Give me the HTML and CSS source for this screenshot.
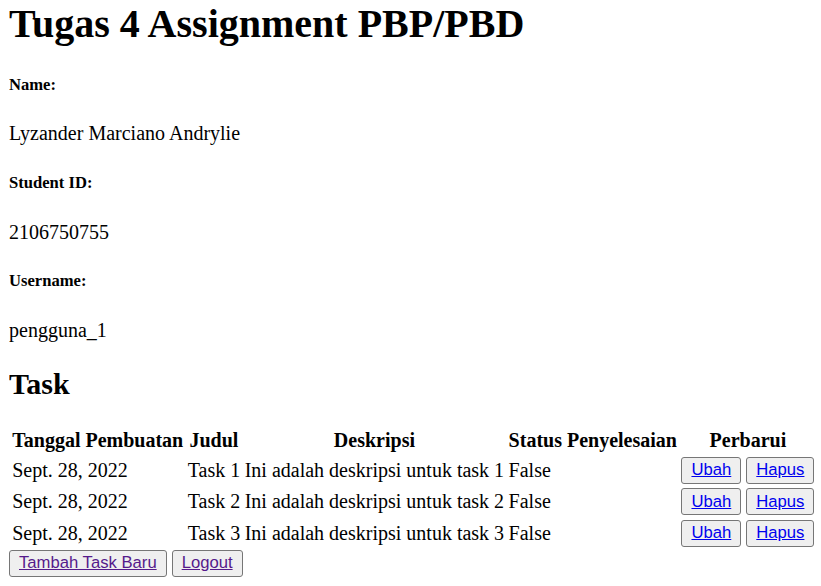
FILE: index.html
```html
<!DOCTYPE html>
<html>
<head>
<meta charset="utf-8">
<title>Tugas 4</title>
<link rel="stylesheet" href="styles.css">
</head>
<body>
<h1 class="title">Tugas 4 Assignment PBP/PBD</h1>
<h5 class="label">Name:</h5>
<p class="value">Lyzander Marciano Andrylie</p>
<h5 class="label">Student ID:</h5>
<p class="value">2106750755</p>
<h5 class="label">Username:</h5>
<p class="value">pengguna_1</p>
<h2 class="section">Task</h2>
<table class="tasks">
  <tr>
    <th>Tanggal Pembuatan</th>
    <th>Judul</th>
    <th>Deskripsi</th>
    <th>Status Penyelesaian</th>
    <th>Perbarui</th>
  </tr>
  <tr>
    <td>Sept. 28, 2022</td>
    <td>Task 1</td>
    <td>Ini adalah deskripsi untuk task 1</td>
    <td>False</td>
    <td><button class="btn"><a class="link" href="#">Ubah</a></button> <button class="btn"><a class="link" href="#">Hapus</a></button></td>
  </tr>
  <tr>
    <td>Sept. 28, 2022</td>
    <td>Task 2</td>
    <td>Ini adalah deskripsi untuk task 2</td>
    <td>False</td>
    <td><button class="btn"><a class="link" href="#">Ubah</a></button> <button class="btn"><a class="link" href="#">Hapus</a></button></td>
  </tr>
  <tr>
    <td>Sept. 28, 2022</td>
    <td>Task 3</td>
    <td>Ini adalah deskripsi untuk task 3</td>
    <td>False</td>
    <td><button class="btn"><a class="link" href="#">Ubah</a></button> <button class="btn"><a class="link" href="#">Hapus</a></button></td>
  </tr>
</table>
<div class="actions">
  <button class="btn"><a class="link visited" href="#">Tambah Task Baru</a></button>
  <button class="btn"><a class="link visited" href="#">Logout</a></button>
</div>
</body>
</html>
```

FILE: styles.css
```css
html {
  background: #ffffff;
}

body {
  margin: 0 0 0 9px;
  font-family: "Liberation Serif", "Times New Roman", serif;
  font-size: 20px;
  color: #000000;
}

.title {
  font-size: 40px;
  font-weight: bold;
  margin: 0 0 26.8px;
  line-height: normal;
}

.label {
  font-size: 16.6px;
  font-weight: bold;
  margin: 27.7px 0;
}

.value {
  margin: 20px 0;
}

.section {
  font-size: 30px;
  font-weight: bold;
  margin: 24.9px 0;
}

.tasks {
  border-spacing: 2.5px;
  white-space: nowrap;
}

.tasks th,
.tasks td {
  padding: 1.25px;
}

.tasks th {
  font-weight: bold;
  text-align: center;
}

.tasks td {
  text-align: left;
}

.btn {
  font-family: "Liberation Sans", Arial, sans-serif;
  font-size: 16.67px;
  padding: 2.5px 9px;
  margin: 0;
  background: #efefef;
  border: 1px solid #767676;
  border-radius: 3px;
  color: #000000;
  line-height: normal;
}

.link {
  color: #0000ee;
  text-decoration: underline;
}

.link.visited {
  color: #551a8b;
}

.actions {
  display: block;
}
```
